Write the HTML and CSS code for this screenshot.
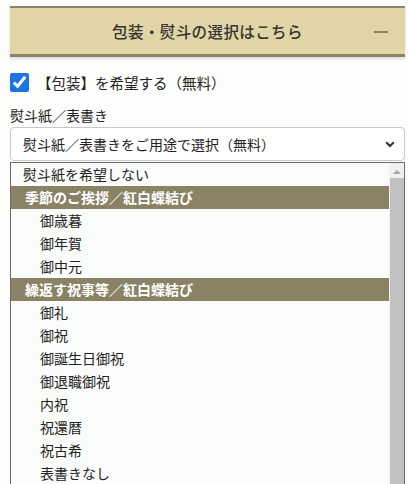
FILE: index.html
```html
<!DOCTYPE html>
<html lang="ja">
  <head>
    <meta charset="UTF-8" />
    <meta name="viewport" content="width=device-width, initial-scale=1.0" />
    <title>包装・熨斗</title>
    <link rel="stylesheet" href="styles.css">
  </head>
  <body>
    <section class="noshi">
      <div class="acc-head">
        <span>包装・熨斗の選択はこちら</span>
        <span class="minus"></span>
      </div>

      <label class="check">
        <input type="checkbox" checked />
        <span>【包装】を希望する（無料）</span>
      </label>

      <div class="field-label">熨斗紙／表書き</div>
      <div class="select">
        <span>熨斗紙／表書きをご用途で選択（無料）</span>
        <svg width="10" height="7" viewBox="0 0 10 7"><path d="M1.2 1.2 L5 5 L8.8 1.2" fill="none" stroke="#333" stroke-width="2"/></svg>
      </div>

      <div class="listbox">
        <ul class="opts">
          <li>熨斗紙を希望しない</li>
          <li class="grp">季節のご挨拶／紅白蝶結び</li>
          <li class="sub">御歳暮</li>
          <li class="sub">御年賀</li>
          <li class="sub">御中元</li>
          <li class="grp">繰返す祝事等／紅白蝶結び</li>
          <li class="sub">御礼</li>
          <li class="sub">御祝</li>
          <li class="sub">御誕生日御祝</li>
          <li class="sub">御退職御祝</li>
          <li class="sub">内祝</li>
          <li class="sub">祝還暦</li>
          <li class="sub">祝古希</li>
          <li class="sub">表書きなし</li>
        </ul>
        <div class="scroll">
          <span class="arrow"></span>
          <span class="thumb"></span>
        </div>
      </div>
    </section>
  </body>
</html>
```

FILE: styles.css
```css
html, body {
  margin: 0;
  height: 484px;
  overflow: hidden;
  background: #fdfdfc;
}
body {
  font-family: "Noto Sans CJK JP", "Noto Sans", sans-serif;
  color: #222;
}
.noshi {
  padding: 6px 4px 0 10px;
}
.acc-head {
  position: relative;
  height: 46px;
  border-top: 2px solid #8b8466;
  border-bottom: 3px solid #8b8466;
  background: #e2d5a5;
  box-shadow: 0 2px 3px rgba(0, 0, 0, 0.15);
  display: flex;
  align-items: center;
  justify-content: center;
  font-size: 15.5px;
  font-weight: 500;
  letter-spacing: 0.4px;
  color: #333;
}
.minus {
  position: absolute;
  right: 17px;
  top: 23px;
  width: 14px;
  height: 2px;
  background: #8b8466;
}
.check {
  display: flex;
  align-items: center;
  margin-top: 16px;
  font-size: 14.5px;
  height: 19px;
}
.check input {
  width: 19px;
  height: 19px;
  margin: 0 8px 0 0;
  accent-color: #1c74e4;
}
.field-label {
  margin-top: 13px;
  font-size: 14px;
  line-height: 20px;
}
.select {
  margin-top: 2px;
  height: 32px;
  border: 1px solid #c8c8c8;
  border-radius: 4px;
  display: flex;
  align-items: center;
  justify-content: space-between;
  padding: 0 9px 0 12px;
  font-size: 14px;
  background: #fff;
}
.listbox {
  margin-top: 1px;
  height: 330px;
  border: 1px solid #6b6b6b;
  background: #fafcf9;
  display: flex;
}
.opts {
  list-style: none;
  margin: 0;
  padding: 0;
  flex: 1;
  font-size: 14px;
}
.opts li {
  height: 23px;
  line-height: 22px;
  padding-left: 12px;
}
.opts .grp {
  background: #8b8266;
  color: #fff;
  font-weight: bold;
  padding-left: 14px;
}
.opts .sub {
  padding-left: 29px;
}
.scroll {
  width: 15px;
  display: flex;
  flex-direction: column;
  align-items: center;
  background: #f0f0f0;
}
.arrow {
  margin: 7px 0 4px;
  width: 0;
  height: 0;
  border-left: 4px solid transparent;
  border-right: 4px solid transparent;
  border-bottom: 4px solid #a3a3a3;
}
.thumb {
  width: 14px;
  flex: 1;
  background: #c1c1c1;
}
```
